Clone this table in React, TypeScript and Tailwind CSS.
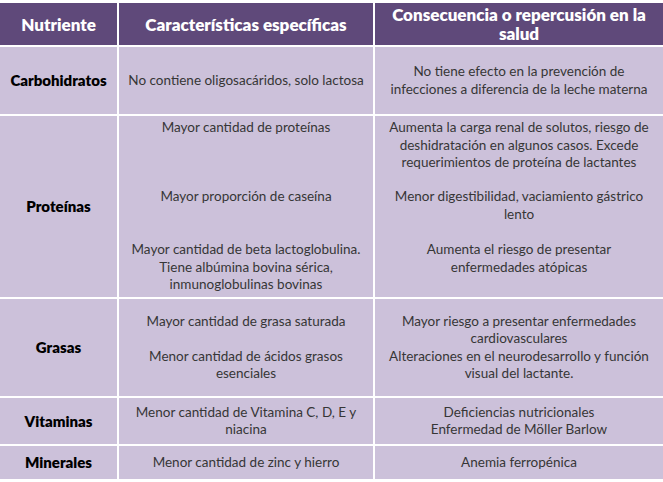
const head = 'bg-[#5f497a] text-white font-extrabold text-[17px] leading-[19px] flex items-center justify-center text-center px-1'
const first = 'bg-[#ccc1da] text-black font-extrabold text-[15px] flex items-center justify-center text-center'
const cell = 'bg-[#ccc1da] text-[#363636] text-[13.5px] leading-[17.5px] flex flex-col items-center justify-center text-center px-2'

export default function App() {
  return (
    <div className="w-[663px] h-[482px] bg-white pt-[3px]" style={{ fontFamily: 'Lato, "Open Sans", sans-serif' }}>
      <div className="grid grid-cols-[117px_254px_288px] grid-rows-[42px_67px_181px_97px_46px_33px] gap-[2px]">
        <div className={head}>Nutriente</div>
        <div className={head}>Características específicas</div>
        <div className={head}>
          Consecuencia o repercusión en la
          <br />
          salud
        </div>

        <div className={first}>Carbohidratos</div>
        <div className={cell}>No contiene oligosacáridos, solo lactosa</div>
        <div className={cell}>
          <span>No tiene efecto en la prevención de</span>
          <span>infecciones a diferencia de la leche materna</span>
        </div>

        <div className={first}>Proteínas</div>
        <div className={cell}>
          <div className="h-[69px]">Mayor cantidad de proteínas</div>
          <div className="h-[53px]">Mayor proporción de caseína</div>
          <div className="h-[53px]">
            Mayor cantidad de beta lactoglobulina.
            <br />
            Tiene albúmina bovina sérica,
            <br />
            inmunoglobulinas bovinas
          </div>
        </div>
        <div className={cell}>
          <div className="h-[69px]">
            Aumenta la carga renal de solutos, riesgo de
            <br />
            deshidratación en algunos casos. Excede
            <br />
            requerimientos de proteína de lactantes
          </div>
          <div className="h-[53px]">
            Menor digestibilidad, vaciamiento gástrico
            <br />
            lento
          </div>
          <div className="h-[53px]">
            Aumenta el riesgo de presentar
            <br />
            enfermedades atópicas
          </div>
        </div>

        <div className={first}>Grasas</div>
        <div className={cell}>
          <div>Mayor cantidad de grasa saturada</div>
          <div className="h-[17.5px]"></div>
          <div>Menor cantidad de ácidos grasos</div>
          <div>esenciales</div>
        </div>
        <div className={cell}>
          <div>Mayor riesgo a presentar enfermedades</div>
          <div>cardiovasculares</div>
          <div>Alteraciones en el neurodesarrollo y función</div>
          <div>visual del lactante.</div>
        </div>

        <div className={first}>Vitaminas</div>
        <div className={cell}>
          <div>Menor cantidad de Vitamina C, D, E y</div>
          <div>niacina</div>
        </div>
        <div className={cell}>
          <div>Deficiencias nutricionales</div>
          <div>Enfermedad de Möller Barlow</div>
        </div>

        <div className={first}>Minerales</div>
        <div className={cell}>Menor cantidad de zinc y hierro</div>
        <div className={cell}>Anemia ferropénica</div>
      </div>
    </div>
  )
}
